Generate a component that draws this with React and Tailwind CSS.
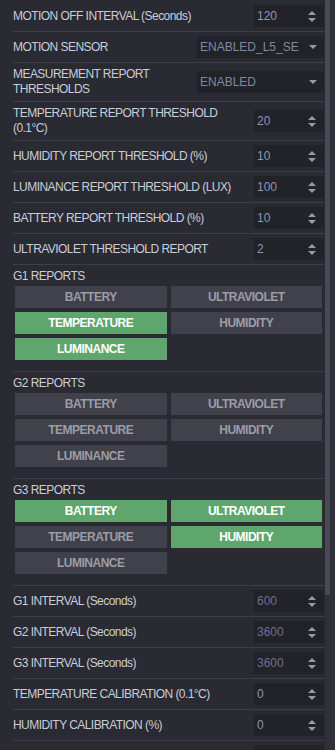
import React from "react";

const rows = [
	{ label: "MOTION OFF INTERVAL (Seconds)", type: "number", value: "120" },
	{ label: "MOTION SENSOR", type: "select", value: "ENABLED_L5_SENSOR" },
	{ label: "MEASUREMENT REPORT THRESHOLDS", type: "select", value: "ENABLED" },
	{ label: "TEMPERATURE REPORT THRESHOLD (0.1°C)", type: "number", value: "20" },
	{ label: "HUMIDITY REPORT THRESHOLD (%)", type: "number", value: "10" },
	{ label: "LUMINANCE REPORT THRESHOLD (LUX)", type: "number", value: "100" },
	{ label: "BATTERY REPORT THRESHOLD (%)", type: "number", value: "10" },
	{ label: "ULTRAVIOLET THRESHOLD REPORT", type: "number", value: "2" },
];

const groups = [
	{ name: "G1 REPORTS", on: ["TEMPERATURE", "LUMINANCE"] },
	{ name: "G2 REPORTS", on: [] },
	{ name: "G3 REPORTS", on: ["BATTERY", "ULTRAVIOLET", "HUMIDITY"] },
];

const reportTypes = ["BATTERY", "ULTRAVIOLET", "TEMPERATURE", "HUMIDITY", "LUMINANCE"];

const bottomRows = [
	{ label: "G1 INTERVAL (Seconds)", type: "number", value: "600", dim: true },
	{ label: "G2 INTERVAL (Seconds)", type: "number", value: "3600", dim: true },
	{ label: "G3 INTERVAL (Seconds)", type: "number", value: "3600", dim: true },
	{ label: "TEMPERATURE CALIBRATION (0.1°C)", type: "number", value: "0" },
	{ label: "HUMIDITY CALIBRATION (%)", type: "number", value: "0" },
	{ label: "LUMINANCE CALIBRATION (LUX)", type: "number", value: "0" },
	{ label: "ULTRAVIOLET CALIBRATION", type: "number", value: "0" },
];

const Spinner = () => (
	<svg width="8" height="11" viewBox="0 0 8 11" className="shrink-0">
		<path d="M0 4 L4 0 L8 4 Z" fill="#9a9aa3" />
		<path d="M0 7 L8 7 L4 11 Z" fill="#9a9aa3" />
	</svg>
);

const Caret = () => (
	<svg width="8" height="4" viewBox="0 0 8 4" className="shrink-0">
		<path d="M0 0 L8 0 L4 4 Z" fill="#9a9aa3" />
	</svg>
);

const Field = ({ item }) => {
	if (item.type === "select") {
		return (
			<div className="w-[127px] h-[22px] shrink-0 bg-[#222229] flex items-center pl-[3px] pr-[7px] gap-[10px]">
				<span className="flex-1 overflow-hidden whitespace-nowrap text-[12px] text-[#7f89a3]">
					{item.value}
				</span>
				<Caret />
			</div>
		);
	}

	return (
		<div className="w-[70px] h-[22px] shrink-0 bg-[#222229] flex items-center justify-between pl-[3px] pr-[8px]">
			<span className={`text-[12px] ${item.dim ? "text-[#6b7189]" : "text-[#8b96b1]"}`}>
				{item.value}
			</span>
			<Spinner />
		</div>
	);
};

const Row = ({ item }) => (
	<div className="flex items-center gap-2 py-1 border-b border-[#3e3e48]">
		<div className="flex-1 min-w-0 text-[12px] leading-[15px] tracking-[-0.55px] text-[#c9cdd6]">
			{item.label}
		</div>
		<Field item={item} />
	</div>
);

const Group = ({ group }) => (
	<div className="pt-1 pb-[11px] border-b border-[#3e3e48]">
		<div className="text-[12px] leading-[15px] tracking-[-0.55px] text-[#c9cdd6]">
			{group.name}
		</div>
		<div className="mt-[2px] px-[2px] grid grid-cols-2 gap-1">
			{reportTypes.map((t) => {
				const active = group.on.includes(t);
				return (
					<div
						key={t}
						className={
							active
								? "h-[22px] flex items-center justify-center bg-[#5ea66e] text-white text-[12px] font-bold tracking-[-0.5px]"
								: "h-[22px] flex items-center justify-center bg-[#41414b] text-[#9c9ca6] text-[12px] font-bold tracking-[-0.5px]"
						}
					>
						{t}
					</div>
				);
			})}
		</div>
	</div>
);

export default function App() {
	return (
		<div className="w-[335px] h-[750px] overflow-hidden bg-[#2a2a33] flex font-['Liberation_Sans',Arial,sans-serif]">
			{/* Settings list */}
			<div className="w-[325px] pt-[1px] pl-[13px] pr-[1px]">
				{rows.map((item) => (
					<Row key={item.label} item={item} />
				))}

				{groups.map((g) => (
					<Group key={g.name} group={g} />
				))}

				{bottomRows.map((item) => (
					<Row key={item.label} item={item} />
				))}
			</div>

			{/* Scrollbar */}
			<div className="w-[10px] h-full bg-[#30303a]">
				<div className="w-[5px] h-[595px] bg-[#4a4a55]" />
			</div>
		</div>
	);
}
